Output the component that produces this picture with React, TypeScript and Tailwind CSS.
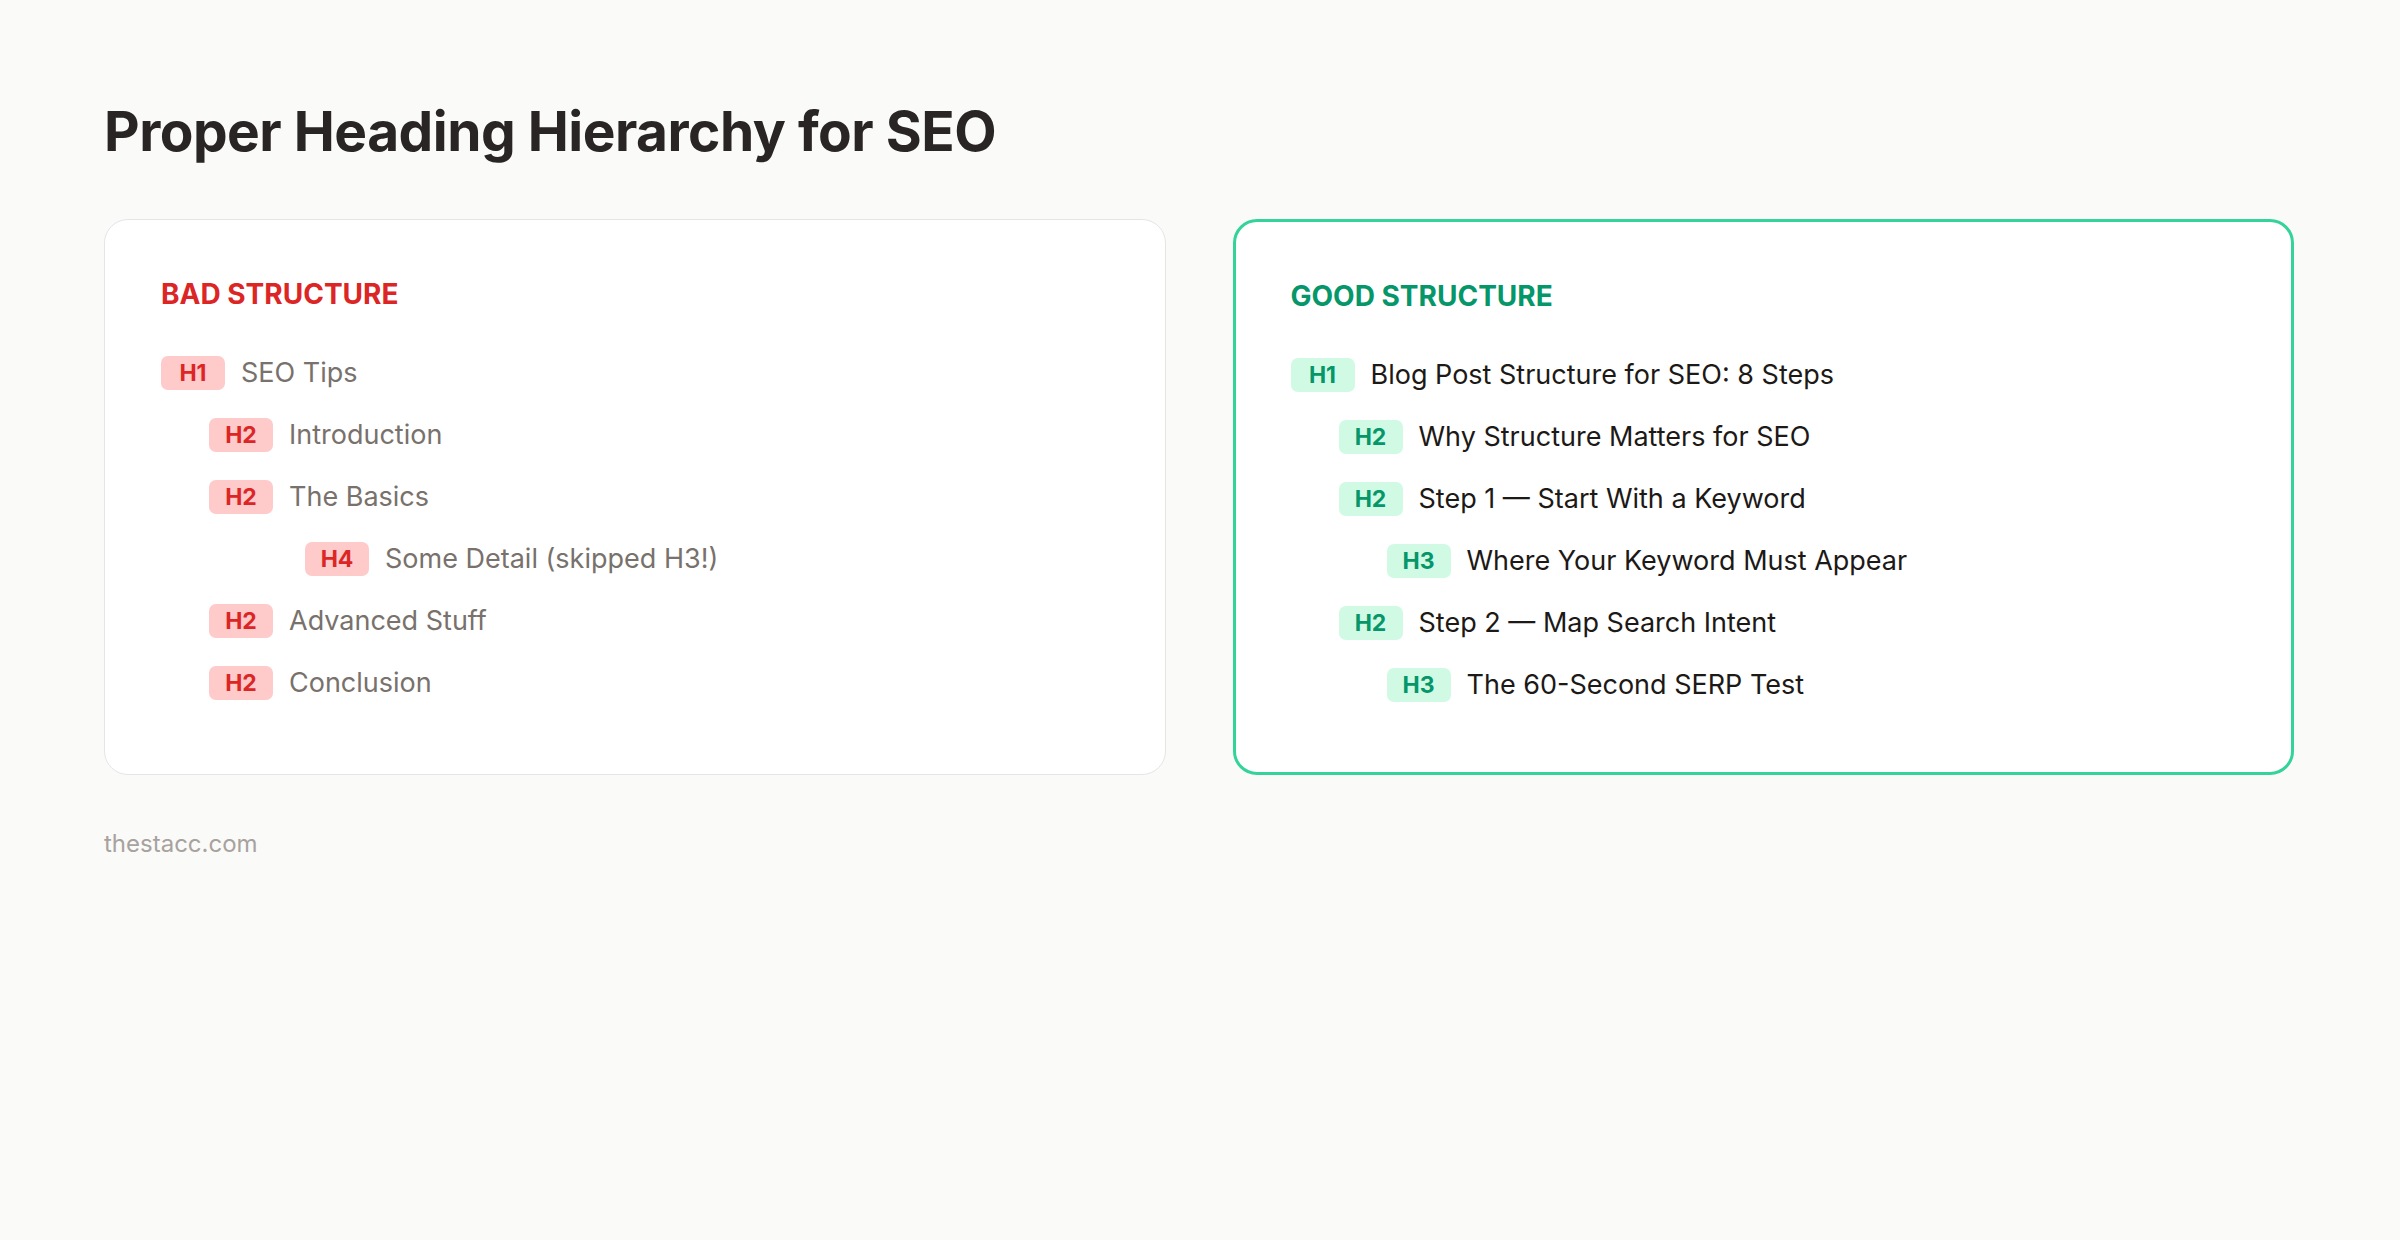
const bad = [
  { t: "H1", l: 0, s: "SEO Tips" },
  { t: "H2", l: 1, s: "Introduction" },
  { t: "H2", l: 1, s: "The Basics" },
  { t: "H4", l: 3, s: "Some Detail (skipped H3!)" },
  { t: "H2", l: 1, s: "Advanced Stuff" },
  { t: "H2", l: 1, s: "Conclusion" },
];
const good = [
  { t: "H1", l: 0, s: "Blog Post Structure for SEO: 8 Steps" },
  { t: "H2", l: 1, s: "Why Structure Matters for SEO" },
  { t: "H2", l: 1, s: "Step 1 — Start With a Keyword" },
  { t: "H3", l: 2, s: "Where Your Keyword Must Appear" },
  { t: "H2", l: 1, s: "Step 2 — Map Search Intent" },
  { t: "H3", l: 2, s: "The 60-Second SERP Test" },
];

function Row({ r, good }: { r: { t: string; l: number; s: string }; good: boolean }) {
  return (
    <div className="flex items-center h-[62px] gap-[16px]" style={{ paddingLeft: r.l * 48 }}>
      <span
        className={
          "w-[64px] h-[34px] rounded-[7px] flex items-center justify-center text-[23px] font-bold " +
          (good ? "bg-[#d1fae5] text-[#059669]" : "bg-[#fecaca] text-[#dc2626]")
        }
      >
        {r.t}
      </span>
      <span className={"text-[27px] " + (good ? "text-[#1c1917]" : "text-[#78716c]")}>{r.s}</span>
    </div>
  );
}

export default function App() {
  return (
    <div
      className="w-[2400px] h-[1240px] bg-[#fafaf9] pt-[104px] px-[104px]"
      style={{ fontFamily: "Inter, 'Noto Sans', sans-serif" }}
    >
      <h1 className="text-[55px] leading-none font-bold text-[#292524] tracking-[-0.5px]">
        Proper Heading Hierarchy for SEO
      </h1>
      <div className="grid grid-cols-2 gap-[67px] w-[2190px] mt-[60px]">
        <div className="bg-white border-[1.5px] border-[#e5e5e5] rounded-[24px] h-[556px] pt-[57px] px-[56px]">
          <div className="text-[28px] leading-[34px] font-bold text-[#dc2626] mb-[31px]">BAD STRUCTURE</div>
          {bad.map((r, i) => (
            <Row key={i} r={r} good={false} />
          ))}
        </div>
        <div className="bg-white border-[3px] border-[#34d399] rounded-[24px] h-[556px] pt-[57px] px-[55px]">
          <div className="text-[28px] leading-[34px] font-bold text-[#059669] mb-[31px]">GOOD STRUCTURE</div>
          {good.map((r, i) => (
            <Row key={i} r={r} good={true} />
          ))}
        </div>
      </div>
      <div className="mt-[51px] text-[24px] text-[#a8a29e]">thestacc.com</div>
    </div>
  );
}
